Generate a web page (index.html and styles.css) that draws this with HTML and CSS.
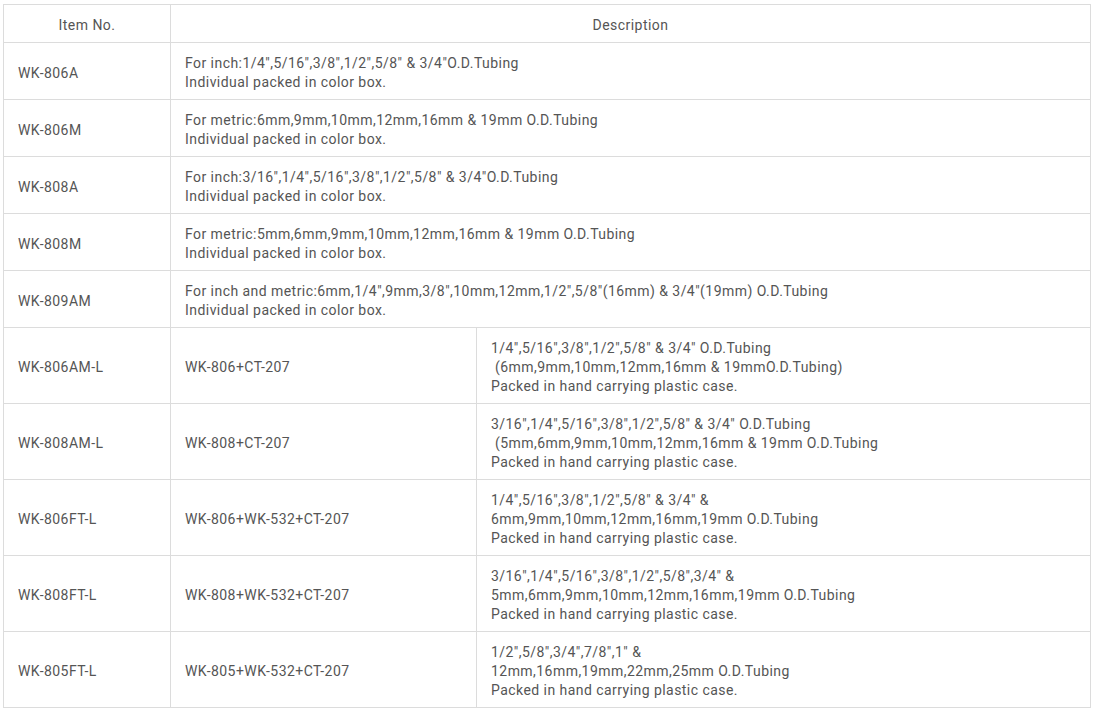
FILE: index.html
```html
<!DOCTYPE html>
<html>
<head>
<meta charset="utf-8">
<link rel="stylesheet" href="styles.css">
</head>
<body>
<table class="spec">
  <colgroup><col class="c1"><col class="c2"><col class="c3"></colgroup>
  <thead>
    <tr><th>Item No.</th><th colspan="2">Description</th></tr>
  </thead>
  <tbody>
    <tr><td>WK-806A</td><td colspan="2">For inch:1/4",5/16",3/8",1/2",5/8" &amp; 3/4"O.D.Tubing<br>Individual packed in color box.</td></tr>
    <tr><td>WK-806M</td><td colspan="2">For metric:6mm,9mm,10mm,12mm,16mm &amp; 19mm O.D.Tubing<br>Individual packed in color box.</td></tr>
    <tr><td>WK-808A</td><td colspan="2">For inch:3/16",1/4",5/16",3/8",1/2",5/8" &amp; 3/4"O.D.Tubing<br>Individual packed in color box.</td></tr>
    <tr><td>WK-808M</td><td colspan="2">For metric:5mm,6mm,9mm,10mm,12mm,16mm &amp; 19mm O.D.Tubing<br>Individual packed in color box.</td></tr>
    <tr><td>WK-809AM</td><td colspan="2">For inch and metric:6mm,1/4",9mm,3/8",10mm,12mm,1/2",5/8"(16mm) &amp; 3/4"(19mm) O.D.Tubing<br>Individual packed in color box.</td></tr>
    <tr class="tall"><td>WK-806AM-L</td><td>WK-806+CT-207</td><td>1/4",5/16",3/8",1/2",5/8" &amp; 3/4" O.D.Tubing<br>&nbsp;(6mm,9mm,10mm,12mm,16mm &amp; 19mmO.D.Tubing)<br>Packed in hand carrying plastic case.</td></tr>
    <tr class="tall"><td>WK-808AM-L</td><td>WK-808+CT-207</td><td>3/16",1/4",5/16",3/8",1/2",5/8" &amp; 3/4" O.D.Tubing<br>&nbsp;(5mm,6mm,9mm,10mm,12mm,16mm &amp; 19mm O.D.Tubing<br>Packed in hand carrying plastic case.</td></tr>
    <tr class="tall"><td>WK-806FT-L</td><td>WK-806+WK-532+CT-207</td><td>1/4",5/16",3/8",1/2",5/8" &amp; 3/4" &amp;<br>6mm,9mm,10mm,12mm,16mm,19mm O.D.Tubing<br>Packed in hand carrying plastic case.</td></tr>
    <tr class="tall"><td>WK-808FT-L</td><td>WK-808+WK-532+CT-207</td><td>3/16",1/4",5/16",3/8",1/2",5/8",3/4" &amp;<br>5mm,6mm,9mm,10mm,12mm,16mm,19mm O.D.Tubing<br>Packed in hand carrying plastic case.</td></tr>
    <tr class="tall"><td>WK-805FT-L</td><td>WK-805+WK-532+CT-207</td><td>1/2",5/8",3/4",7/8",1" &amp;<br>12mm,16mm,19mm,22mm,25mm O.D.Tubing<br>Packed in hand carrying plastic case.</td></tr>
  </tbody>
</table>
</body>
</html>
```

FILE: styles.css
```css
html, body {
  margin: 0;
  padding: 0;
  background: #fff;
}
body {
  padding: 4px 2px 0 3px;
  font-family: "Roboto", "Liberation Sans", sans-serif;
  font-size: 14px;
  line-height: 19px;
  letter-spacing: 0.45px;
  color: #555555;
}
.spec {
  border-collapse: collapse;
  width: 1088px;
  table-layout: fixed;
}
.c1 { width: 167px; }
.c2 { width: 306px; }
.spec th,
.spec td {
  border: 1px solid #dcdcdc;
  padding: 11px 14px 7px;
  vertical-align: middle;
  text-align: left;
  font-weight: normal;
}
.spec th {
  text-align: center;
}
```
